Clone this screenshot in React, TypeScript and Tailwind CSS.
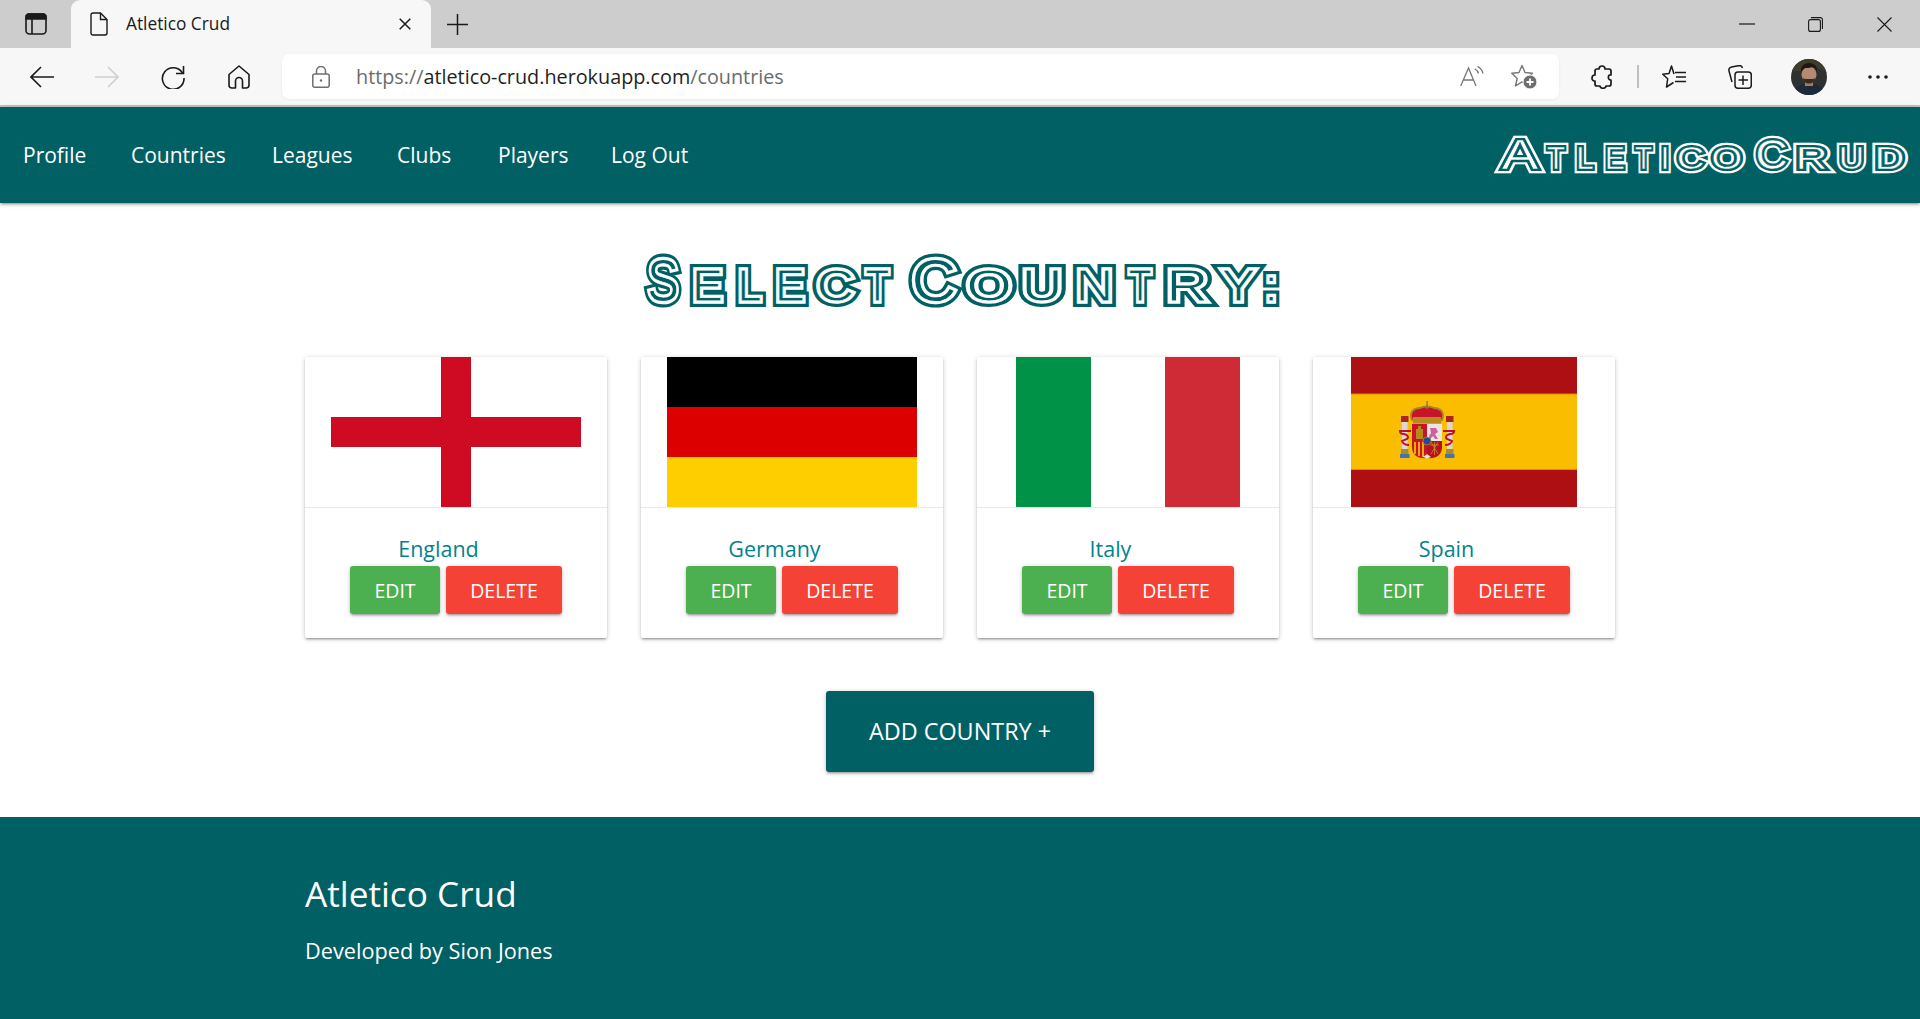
import React from "react";

const SHADOW =
  "shadow-[0_2px_2px_0_rgba(0,0,0,0.14),0_3px_1px_-2px_rgba(0,0,0,0.12),0_1px_5px_0_rgba(0,0,0,0.2)]";

const SANS = "font-['Open_Sans','Liberation_Sans',sans-serif]";

type Glyph = [string, number, number, boolean?];

function fitLength(ch: string, left: number, right: number, stroke: number) {
  const c = ch.toLowerCase();
  if (c === ":" || c === "i") return undefined;
  const ratio = c === "a" || c === "y" || c === "t" ? 1.03 : 1.13;
  return (right - left - stroke) * ratio;
}

function StripedText({
  id,
  glyphs,
  box,
  baseline,
  small,
  big,
  ink,
  paper,
  widths,
  className,
}: {
  id: string;
  glyphs: Glyph[];
  box: [number, number, number, number];
  baseline: number;
  small: number;
  big: number;
  ink: string;
  paper: string;
  widths: [number, number, number];
  className?: string;
}) {
  return (
    <svg
      viewBox={box.join(" ")}
      width={box[2]}
      height={box[3]}
      className={className}
      fontFamily="'Liberation Sans', sans-serif"
    >
      <defs>
        <text id={id} y={baseline} textAnchor="middle" strokeLinejoin="miter" strokeMiterlimit={3} className="uppercase">
          {glyphs.map(([ch, left, right, isBig], i) =>
            ch === " " ? (
              <tspan key={i}> </tspan>
            ) : (
              <tspan
                key={i}
                x={(left + right) / 2}
                fontSize={isBig ? big : small}
                textLength={fitLength(ch, left, right, widths[0])}
                lengthAdjust="spacingAndGlyphs"
              >
                {ch}
              </tspan>
            ),
          )}
        </text>
      </defs>
      <use href={`#${id}`} fill={ink} stroke={ink} strokeWidth={widths[0]} />
      <use href={`#${id}`} fill={paper} stroke={paper} strokeWidth={widths[1]} />
      <use href={`#${id}`} fill={ink} stroke={paper} strokeWidth={widths[2]} />
    </svg>
  );
}

const titleGlyphs: Glyph[] = [
  ["S", 643, 683, true],
  ["e", 688, 727],
  ["l", 733, 766],
  ["e", 771, 809],
  ["c", 813, 858],
  ["t", 862, 897],
  [" ", 0, 0],
  ["C", 908, 960, true],
  ["o", 963, 1015],
  ["u", 1018, 1066],
  ["n", 1072, 1117],
  ["t", 1123, 1157],
  ["r", 1163, 1212],
  ["y", 1216, 1261],
  [":", 1265, 1277],
];

const logoGlyphs: Glyph[] = [
  ["A", 1498, 1542, true],
  ["t", 1543, 1569],
  ["l", 1573, 1597],
  ["e", 1602, 1628],
  ["t", 1631, 1656],
  ["i", 1659, 1671],
  ["c", 1674, 1707],
  ["o", 1711, 1747],
  [" ", 0, 0],
  ["C", 1753, 1790, true],
  ["r", 1793, 1830],
  ["u", 1836, 1867],
  ["d", 1872, 1907],
];

const I = "fill-none stroke-current";

function Spain() {
  return (
    <svg width="226" height="150" viewBox="0 0 226 150" className="block">
      <rect width="226" height="150" fill="#ad0f13" />
      <rect y="37" width="226" height="75.500" fill="#fabd00" />
      <path d="M0 37h226M0 112.500h226" stroke="#e08a00" strokeWidth="1" />
      <path d="M61 63c-3-7 1-12 8-12 3-2 11-2 14 0 7 0 11 5 8 12z" fill="#c8142a" stroke="#a8862c" strokeWidth="1.800" />
      <rect x="75.400" y="44" width="1.400" height="8" fill="#8a7a30" />
      <rect x="62" y="60" width="28" height="6.500" fill="#b98a1c" />
      <rect x="51" y="65" width="5.500" height="32" fill="#d8d8d8" />
      <rect x="96" y="65" width="5.500" height="32" fill="#d8d8d8" />
      <rect x="50" y="59" width="7.500" height="6" fill="#a8261e" />
      <rect x="95" y="59" width="7.500" height="6" fill="#a8261e" />
      <rect x="50" y="92" width="7.500" height="5" fill="#b18a20" />
      <rect x="95" y="92" width="7.500" height="5" fill="#b18a20" />
      <rect x="49" y="97" width="9.500" height="4" fill="#3f74b8" />
      <rect x="94" y="97" width="9.500" height="4" fill="#3f74b8" />
      <path d="M60 74H49c0 2 1 3 4 3 4 1 5 3 3 5l-5 2c1 3 4 4 7 4" fill="none" stroke="#bf1220" strokeWidth="2" />
      <path d="M92 74h11c0 2-1 3-4 3-4 1-5 3-3 5l5 2c-1 3-4 4-7 4" fill="none" stroke="#bf1220" strokeWidth="2" />
      <path d="M61 67h15v34c-9 1-15-3-15-11z" fill="#c8142a" />
      <path d="M76 67h15v23c0 8-6 12-15 11z" fill="#b5121f" />
      <rect x="76" y="67" width="15" height="17" fill="#e8e6e0" />
      <path d="M79 71l6 0 2 4-3 2 3 5h-3l-2-3-3 3-1-3 2-3z" fill="#cf5f9f" />
      <rect x="65" y="72" width="7" height="10" fill="#b68a1a" />
      <rect x="67" y="69" width="3" height="4" fill="#b68a1a" />
      <path d="M63 85h2v12h-2zM67 85h2v14h-2zM71 85h2v15h-2z" fill="#eaa90f" />
      <path d="M79 88h9M83.500 85v13M80 85l7 12M87 85l-7 12" stroke="#c9922a" strokeWidth="0.800" />
      <circle cx="76" cy="84" r="4" fill="#1f4c99" stroke="#b98a1c" strokeWidth="0.800" />
      <path d="M72 100l4-3 4 3-4 1.500z" fill="#e0e0e0" />
    </svg>
  );
}

function Card({ name, flag }: { name: string; flag: React.ReactNode }) {
  return (
    <div className={`w-[302px] h-[281px] bg-white rounded-[2px] ${SHADOW}`}>
      <div className="h-[150px] flex justify-center">{flag}</div>
      <div className="border-t border-[#e8e8e8] pt-[26px] flex flex-col items-center">
        <div className="h-[32px] pr-[35px] text-[21.500px] leading-[30px] text-[#00838f]">{name}</div>
        <div className="flex gap-[6px]">
          <button className={`w-[90px] h-[48px] pt-[1px] rounded-[3px] bg-[#4caf50] text-white text-[19.500px] ${SHADOW}`}>EDIT</button>
          <button className={`w-[116px] h-[48px] pt-[1px] rounded-[3px] bg-[#f44336] text-white text-[19.500px] ${SHADOW}`}>DELETE</button>
        </div>
      </div>
    </div>
  );
}

function NavLink({ label, w }: { label: string; w: string }) {
  return <a className={`${w} block whitespace-nowrap`}>{label}</a>;
}

export default function App() {
  return (
    <div className={`w-[1920px] h-[1019px] overflow-hidden bg-white flex flex-col ${SANS}`}>
      {/* tab strip */}
      <div className="h-[48px] bg-[#cdcdcd] flex items-stretch text-[#1a1a1a] shrink-0">
        <div className="w-[71px] flex items-center justify-center pl-[1px]">
          <svg width="22" height="22" viewBox="0 0 22 22" className={I} strokeWidth="1.600">
            <rect x="1" y="1" width="20" height="20" rx="3.500" />
            <path d="M1 3.500a2.500 2.500 0 0 1 2.500-2.500h15a2.500 2.500 0 0 1 2.500 2.500V6H1z" fill="currentColor" />
            <path d="M7 6v15" />
          </svg>
        </div>
        <div className="w-[360px] bg-[#f7f7f7] rounded-t-[9px] flex items-center">
          <svg width="18" height="24" viewBox="0 0 18 24" className={`ml-[19px] ${I}`} strokeWidth="1.400">
            <path d="M3 1h7.500L17 7.500V21a2 2 0 0 1-2 2H3a2 2 0 0 1-2-2V3a2 2 0 0 1 2-2z" />
            <path d="M10.500 1v6.500H17" />
          </svg>
          <span className="ml-[18px] w-[273px] text-[17.300px]">Atletico Crud</span>
          <svg width="12" height="12" viewBox="0 0 12 12" className={I} strokeWidth="1.500">
            <path d="M.7.700l10.600 10.600M11.300.700.700 11.300" />
          </svg>
        </div>
        <div className="w-[52px] flex items-center justify-center">
          <svg width="21" height="21" viewBox="0 0 21 21" className={I} strokeWidth="1.500">
            <path d="M10.500 0v21M0 10.500h21" />
          </svg>
        </div>
        <div className="ml-auto flex items-center">
          <div className="w-[69px] flex justify-center">
            <svg width="16" height="2" viewBox="0 0 16 2" className={I} strokeWidth="1.200"><path d="M0 1h16" /></svg>
          </div>
          <div className="w-[69px] flex justify-center">
            <svg width="15" height="15" viewBox="0 0 15 15" className={I} strokeWidth="1.100">
              <rect x=".6" y="2.600" width="11.800" height="11.800" rx="2" />
              <path d="M3 .6h9.400a2 2 0 0 1 2 2V12" />
            </svg>
          </div>
          <div className="w-[69px] flex justify-center mr-[1px]">
            <svg width="15" height="15" viewBox="0 0 15 15" className={I} strokeWidth="1.100">
              <path d="M.5.500l14 14M14.500.500l-14 14" />
            </svg>
          </div>
        </div>
      </div>

      {/* toolbar */}
      <div className="h-[59px] bg-[#f7f7f7] border-b-2 border-[#c4c4c4] flex items-center pl-[8px] shrink-0 text-[#1a1a1a]">
        <div className="w-[66px] flex justify-center pl-[1px]">
          <svg width="24" height="22" viewBox="0 0 24 22" className={I} strokeWidth="1.600">
            <path d="M24 11H1.500M11 1 1 11l10 10" />
          </svg>
        </div>
        <div className="w-[66px] flex justify-center text-[#cfcfcf]">
          <svg width="24" height="22" viewBox="0 0 24 22" className={I} strokeWidth="1.600">
            <path d="M0 11h22.500M13 1l10 10-10 10" />
          </svg>
        </div>
        <div className="w-[66px] flex justify-center">
          <svg width="24" height="24" viewBox="0 0 24 24" className={I} strokeWidth="1.600">
            <path d="M21.500 8A10.800 10.800 0 1 0 23 13" />
            <path d="M22.500 1v7.500H15" />
          </svg>
        </div>
        <div className="w-[66px] flex justify-center">
          <svg width="22" height="24" viewBox="0 0 22 24" className={I} strokeWidth="1.600" strokeLinejoin="round">
            <path d="M11 1 1 9.500V20a3 3 0 0 0 3 3h3.500v-7a3.500 3.500 0 0 1 7 0v7H18a3 3 0 0 0 3-3V9.500z" />
          </svg>
        </div>
        <div className="ml-[10px] w-[1277px] h-[45px] bg-white rounded-[7px] flex items-center pl-[30px] pr-[22px] shadow-[0_1px_3px_rgba(0,0,0,0.06)]">
          <svg width="18" height="22" viewBox="0 0 18 22" className={`text-[#6e6e6e] ${I}`} strokeWidth="1.500">
            <rect x=".8" y="8" width="16.400" height="13.200" rx="2" />
            <path d="M4.500 8V5a4.500 4.500 0 0 1 9 0v3" />
            <circle cx="9" cy="14.500" r="1.200" fill="currentColor" stroke="none" />
          </svg>
          <div className="ml-[26px] text-[19.800px] whitespace-nowrap text-[#6b6b6b]">
            https://<span className="text-[#1f1f1f]">atletico-crud.herokuapp.com</span>/countries
          </div>
          <div className="ml-auto flex items-center text-[#777]">
            <svg width="24" height="21" viewBox="0 0 24 21" className={`mr-[-3px] ${I}`} strokeWidth="1.300">
              <path d="M.7 20 8.500 2 16 20M3.200 14h10.500" />
              <path d="M15 3a7 7 0 0 1 3.500 4.500M17.500 .5a10 10 0 0 1 5.500 7" />
            </svg>
            <svg width="26" height="25" viewBox="0 0 26 25" className={`ml-[30px] ${I}`} strokeWidth="1.400" strokeLinejoin="round">
              <path d="M11 1.500l3 7 7.500.700-5.700 5 1.700 7.400L11 17.800 4.500 22l1.700-7.500L.8 9.200 8 8.500z" />
              <circle cx="19" cy="18" r="7" fill="#6e6e6e" stroke="#fff" strokeWidth="1" />
              <path d="M19 14.500v7M15.500 18h7" stroke="#fff" strokeWidth="1.800" />
            </svg>
          </div>
        </div>
        <div className="ml-[10px] w-[66px] flex justify-center">
          <svg width="22" height="24" viewBox="0 0 22 24" className={I} strokeWidth="1.700" strokeLinejoin="round">
            <path d="M8 4c0-4 6-4 6 0h4a2 2 0 0 1 2 2v4c-3.500-1-3.500 5.500 0 5v4a2 2 0 0 1-2 2h-3c0 3-6 3-6 0H6a2 2 0 0 1-2-2v-3c-4 .5-4-6 0-6V6a2 2 0 0 1 2-2z" />
          </svg>
        </div>
        <div className="ml-[2px] w-[2px] h-[23px] bg-[#c0c0c0]" />
        <div className="ml-[3px] w-[65px] flex justify-center">
          <svg width="25" height="23" viewBox="0 0 25 23" className={I} strokeWidth="1.500" strokeLinejoin="round">
            <path d="M12 9 9.500 1 7 8.500l-6.300.700 5 4.600L4.500 22l7-4.500" />
            <path d="M13 7.500h11M14 12h10M13 16.500h11" />
          </svg>
        </div>
        <div className="w-[66px] flex justify-center">
          <svg width="24" height="24" viewBox="0 0 24 24" className={I} strokeWidth="1.500" strokeLinejoin="round">
            <path d="M4 17 1 6c-.500-2 .500-3.500 2.500-4l8-1.500c1.500 0 2.500 1 3 2.500" />
            <rect x="7" y="7" width="16.300" height="16.300" rx="3" fill="#f7f7f7" />
            <path d="M15 10.500v9.500M10.500 15h9.500" />
          </svg>
        </div>
        <div className="w-[72px] flex justify-center">
          <svg width="36" height="36" viewBox="0 0 36 36" className="rounded-full">
            <rect width="36" height="36" fill="#2d3230" />
            <path d="M0 0h36v14c-4-3-6-4-8-4l-4-4-10 0-4 6H0z" fill="#3f3c2c" />
            <path d="M2 36c1-9 8-11 16-11s15 2 16 11z" fill="#1d2b38" />
            <rect x="14" y="20" width="8" height="7" fill="#a87a62" />
            <ellipse cx="18" cy="15.500" rx="7.500" ry="8" fill="#b58a72" />
            <path d="M10 13c-1-6 4-9 8-9s9 3 8 9c-1-3-2-4-4-5-3 1-7 1-8 1-1 1-3 2-4 4z" fill="#1c1714" />
            <path d="M11.500 18c1 5 3.500 6.500 6.500 6.500s5.500-1.500 6.500-6.500c-1 2-2 2-3.500 2h-6c-1.500 0-2.500 0-3.500-2z" fill="#3a2a24" />
          </svg>
        </div>
        <div className="w-[66px] flex justify-center">
          <svg width="20" height="4" viewBox="0 0 20 4" fill="currentColor">
            <circle cx="2" cy="2" r="1.800" />
            <circle cx="10" cy="2" r="1.800" />
            <circle cx="18" cy="2" r="1.800" />
          </svg>
        </div>
      </div>

      {/* app nav */}
      <nav className={`h-[96px] bg-[#006064] flex items-center justify-between text-white shrink-0 relative ${SHADOW}`}>
        <div className="pl-[23px] flex text-[21px] pt-[1px]">
          <NavLink label="Profile" w="w-[108px]" />
          <NavLink label="Countries" w="w-[141px]" />
          <NavLink label="Leagues" w="w-[125px]" />
          <NavLink label="Clubs" w="w-[101px]" />
          <NavLink label="Players" w="w-[113px]" />
          <NavLink label="Log Out" w="w-[82px]" />
        </div>
        <StripedText
          id="logo"
          glyphs={logoGlyphs}
          box={[1490, 125, 425, 60]}
          baseline={168.500}
          small={32}
          big={43}
          ink="#ffffff"
          paper="#006064"
          widths={[8.500, 4.200, 0.500]}
          className="mr-[5px]"
        />
      </nav>

      {/* page */}
      <main className="flex-1 flex flex-col items-center">
        <h1 className="mt-[37px]">
          <StripedText
            id="title"
            glyphs={titleGlyphs}
            box={[640, 240, 640, 80]}
            baseline={301}
            small={44}
            big={59}
            ink="#006064"
            paper="#ffffff"
            widths={[12, 5.500, 0.800]}
            className="block"
          />
        </h1>
        <div className="mt-[37px] flex gap-[34px]">
          <Card
            name="England"
            flag={
              <svg width="250" height="150" viewBox="0 0 250 150">
                <rect width="250" height="150" fill="#fff" />
                <path d="M110 0h30v150h-30zM0 60h250v30H0z" fill="#cf0a23" />
              </svg>
            }
          />
          <Card
            name="Germany"
            flag={
              <svg width="250" height="150" viewBox="0 0 250 150">
                <rect width="250" height="50" fill="#000" />
                <rect y="50" width="250" height="50" fill="#dd0000" />
                <rect y="100" width="250" height="50" fill="#ffce00" />
              </svg>
            }
          />
          <Card
            name="Italy"
            flag={
              <svg width="224" height="150" viewBox="0 0 224 150">
                <rect width="75" height="150" fill="#009246" />
                <rect x="75" width="75" height="150" fill="#fff" />
                <rect x="149" width="75" height="150" fill="#ce2b37" />
              </svg>
            }
          />
          <Card name="Spain" flag={<Spain />} />
        </div>
        <button className={`mt-[53px] w-[268px] h-[81px] pt-[1px] rounded-[3px] bg-[#006064] text-white text-[23.400px] ${SHADOW}`}>
          ADD COUNTRY +
        </button>
      </main>

      {/* footer */}
      <footer className="h-[202px] bg-[#006064] text-white shrink-0">
        <div className="w-[1310px] mx-auto pt-[53px]">
          <div className="text-[35.200px] leading-[46px]">Atletico Crud</div>
          <div className="mt-[20px] text-[21.700px] leading-[30px]">Developed by Sion Jones</div>
        </div>
      </footer>
    </div>
  );
}
